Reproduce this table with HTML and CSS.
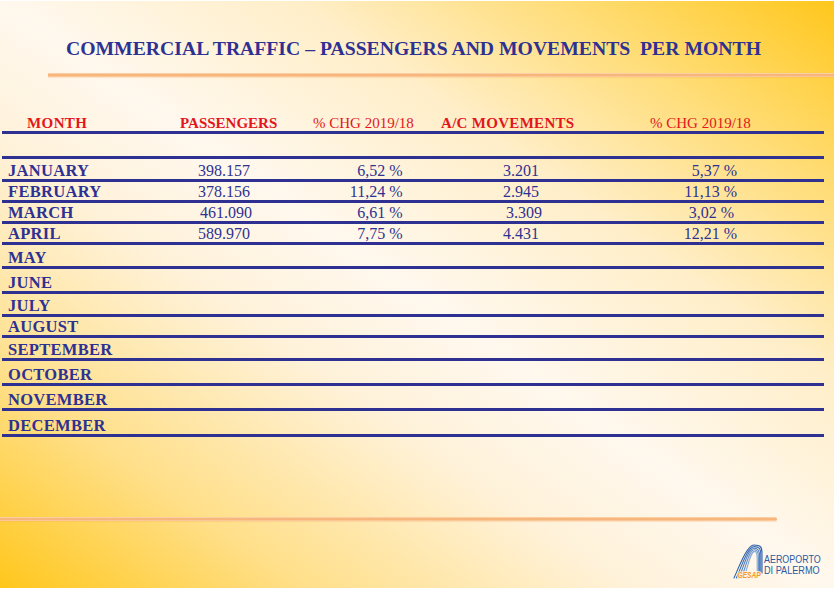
FILE: index.html
```html
<!DOCTYPE html>
<html lang="en">
<head>
<meta charset="utf-8">
<title>Commercial traffic – passengers and movements per month</title>
<link rel="stylesheet" href="styles.css">
</head>
<body>
<div class="slide">
  <h1 class="title">COMMERCIAL TRAFFIC – PASSENGERS AND MOVEMENTS  PER MONTH</h1>
  <div class="rule rule-top"></div>

  <div class="table">
    <div class="thead">
      <span class="th th-month">MONTH</span>
      <span class="th th-bold">PASSENGERS</span>
      <span class="th">% CHG 2019/18</span>
      <span class="th th-bold th-ac">A/C MOVEMENTS</span>
      <span class="th">% CHG 2019/18</span>
    </div>
    <div class="row row-25"></div>
    <div class="row row-23">
      <span class="month">JANUARY</span><span class="pax">398.157</span><span class="pct1">6,52 %</span><span class="ac">3.201</span><span class="pct2">5,37 %</span>
    </div>
    <div class="row row-21">
      <span class="month">FEBRUARY</span><span class="pax">378.156</span><span class="pct1">11,24 %</span><span class="ac">2.945</span><span class="pct2">11,13 %</span>
    </div>
    <div class="row row-21">
      <span class="month">MARCH</span><span class="pax pax-shift">461.090</span><span class="pct1">6,61 %</span><span class="ac ac-shift">3.309</span><span class="pct2 pct2-shift">3,02 %</span>
    </div>
    <div class="row row-21">
      <span class="month">APRIL</span><span class="pax">589.970</span><span class="pct1">7,75 %</span><span class="ac">4.431</span><span class="pct2">12,21 %</span>
    </div>
    <div class="row row-24"><span class="month">MAY</span></div>
    <div class="row row-25"><span class="month">JUNE</span></div>
    <div class="row row-23"><span class="month">JULY</span></div>
    <div class="row row-21"><span class="month">AUGUST</span></div>
    <div class="row row-23"><span class="month">SEPTEMBER</span></div>
    <div class="row row-25"><span class="month">OCTOBER</span></div>
    <div class="row row-25"><span class="month">NOVEMBER</span></div>
    <div class="row row-26"><span class="month">DECEMBER</span></div>
  </div>

  <div class="rule rule-bottom"></div>

  <div class="footer">
    <svg class="logo" width="92" height="37" viewBox="0 0 92 37" aria-label="Aeroporto di Palermo GESAP">
      <g fill="none" stroke-width="1.1" stroke-linecap="round">
        <path stroke="#2f62ab" d="M1 35 C6 24 14 2 21 2 C27.5 2 29 4 29 10 L29 30"/>
        <path stroke="#3a6db5" d="M3.4 35 C8.4 24 14.4 3.6 21.2 3.6 C26.3 3.6 27.8 5.6 27.8 11.6 L27.8 29.5"/>
        <path stroke="#4c7dc0" d="M5.8 35 C10.8 24 14.8 5.2 21.4 5.2 C25.1 5.2 26.6 7.2 26.6 13.2 L26.6 29"/>
        <path stroke="#6690cb" d="M8.2 35 C13.2 24 15.6 6.8 21.6 6.8 C23.9 6.8 25.4 8.8 25.4 14.8 L25.4 28.5"/>
        <path stroke="#87a9d8" d="M10.6 35 C15.6 24 16.6 8.4 21.8 8.4 C22.9 8.4 24.2 10.4 24.2 16.4 L24.2 28"/>
      </g>
      <text class="logo-gesap" transform="translate(4.5 35.3) scale(0.78 1)">GESAP</text>
      <text class="logo-name" transform="translate(31 20) scale(0.85 1)">AEROPORTO</text>
      <text class="logo-name" transform="translate(31 30.6) scale(0.87 1)">DI PALERMO</text>
    </svg>
  </div>
</div>
</body>
</html>
```

FILE: styles.css
```css
html, body {
  margin: 0;
  padding: 0;
  background: #ffffff;
}

body {
  width: 838px;
  height: 594px;
  overflow: hidden;
  font-family: "Liberation Serif", "Times New Roman", serif;
  color: #2e3192;
}

.slide {
  box-sizing: border-box;
  width: 834px;
  height: 587px;
  margin-top: 1px;
  padding-top: 35px;
  display: flex;
  flex-direction: column;
  background: linear-gradient(to bottom left,
    #ffc71c 0%,
    #ffda6a 14%,
    #ffeec8 32%,
    #fff8ee 50%,
    #fff2da 62%,
    #ffdf88 82%,
    #ffc71c 100%);
}

.title {
  margin: 0;
  padding-left: 66px;
  font-size: 19.7px;
  line-height: 24px;
  font-weight: bold;
  white-space: pre;
  color: #2e3192;
}

.rule {
  height: 4px;
  background: linear-gradient(to bottom, #fcd9b4 0%, #f6ab6b 50%, #fcd2a8 100%);
  box-shadow: 0 1px 1px rgba(240, 160, 90, 0.25);
}

.rule-top {
  margin-top: 13px;
  margin-left: 48px;
}

.rule-bottom {
  margin-top: 80px;
  width: 777px;
  border-radius: 0 2px 2px 0;
}

.table {
  margin-top: 37px;
  margin-left: 2px;
  width: 822px;
}

.thead {
  display: grid;
  grid-template-columns: 178px 133px 128px 209px 1fr;
  padding-top: 1px;
  line-height: 16px;
  font-size: 15px;
  color: #e2161c;
  border-bottom: 3px solid #2e3192;
}

.th {
  white-space: nowrap;
}

.th-bold {
  font-weight: bold;
}

.th-month {
  padding-left: 25px;
  font-weight: bold;
  letter-spacing: 0.4px;
}

.th-ac {
  letter-spacing: 0.3px;
}

.row {
  box-sizing: border-box;
  display: grid;
  grid-template-columns: 196px 102px 103px 200px 1fr;
  align-items: end;
  padding-bottom: 0.5px;
  border-bottom: 3px solid #2e3192;
  font-size: 16px;
  line-height: 16px;
  white-space: nowrap;
}

.row-21 { height: 21px; }
.row-23 { height: 23px; }
.row-24 { height: 24px; }
.row-25 { height: 25px; }
.row-26 { height: 26px; }

.month {
  grid-column: 1;
  padding-left: 6px;
  font-weight: bold;
  font-size: 16.5px;
  letter-spacing: 0.3px;
}

.pax {
  grid-column: 2;
}

.pax-shift {
  padding-left: 2px;
}

.pct1 {
  grid-column: 3;
  text-align: right;
  padding-right: 0.5px;
}

.ac {
  grid-column: 4;
  padding-left: 100px;
}

.ac-shift {
  padding-left: 103px;
}

.pct2 {
  grid-column: 5;
  text-align: right;
  padding-right: 87px;
}

.pct2-shift {
  padding-right: 90px;
}

.footer {
  display: flex;
  justify-content: flex-end;
  margin-top: 22px;
  padding-right: 9px;
}

.logo {
  display: block;
}

.logo-gesap {
  font-family: "Liberation Sans", Arial, sans-serif;
  font-size: 8.5px;
  font-weight: bold;
  font-style: italic;
  fill: #f29a2e;
  stroke: #fff3e2;
  stroke-width: 1.6px;
  paint-order: stroke;
}

.logo-name {
  font-family: "Liberation Sans", Arial, sans-serif;
  font-size: 10.5px;
  fill: #2c5aa0;
}
```
